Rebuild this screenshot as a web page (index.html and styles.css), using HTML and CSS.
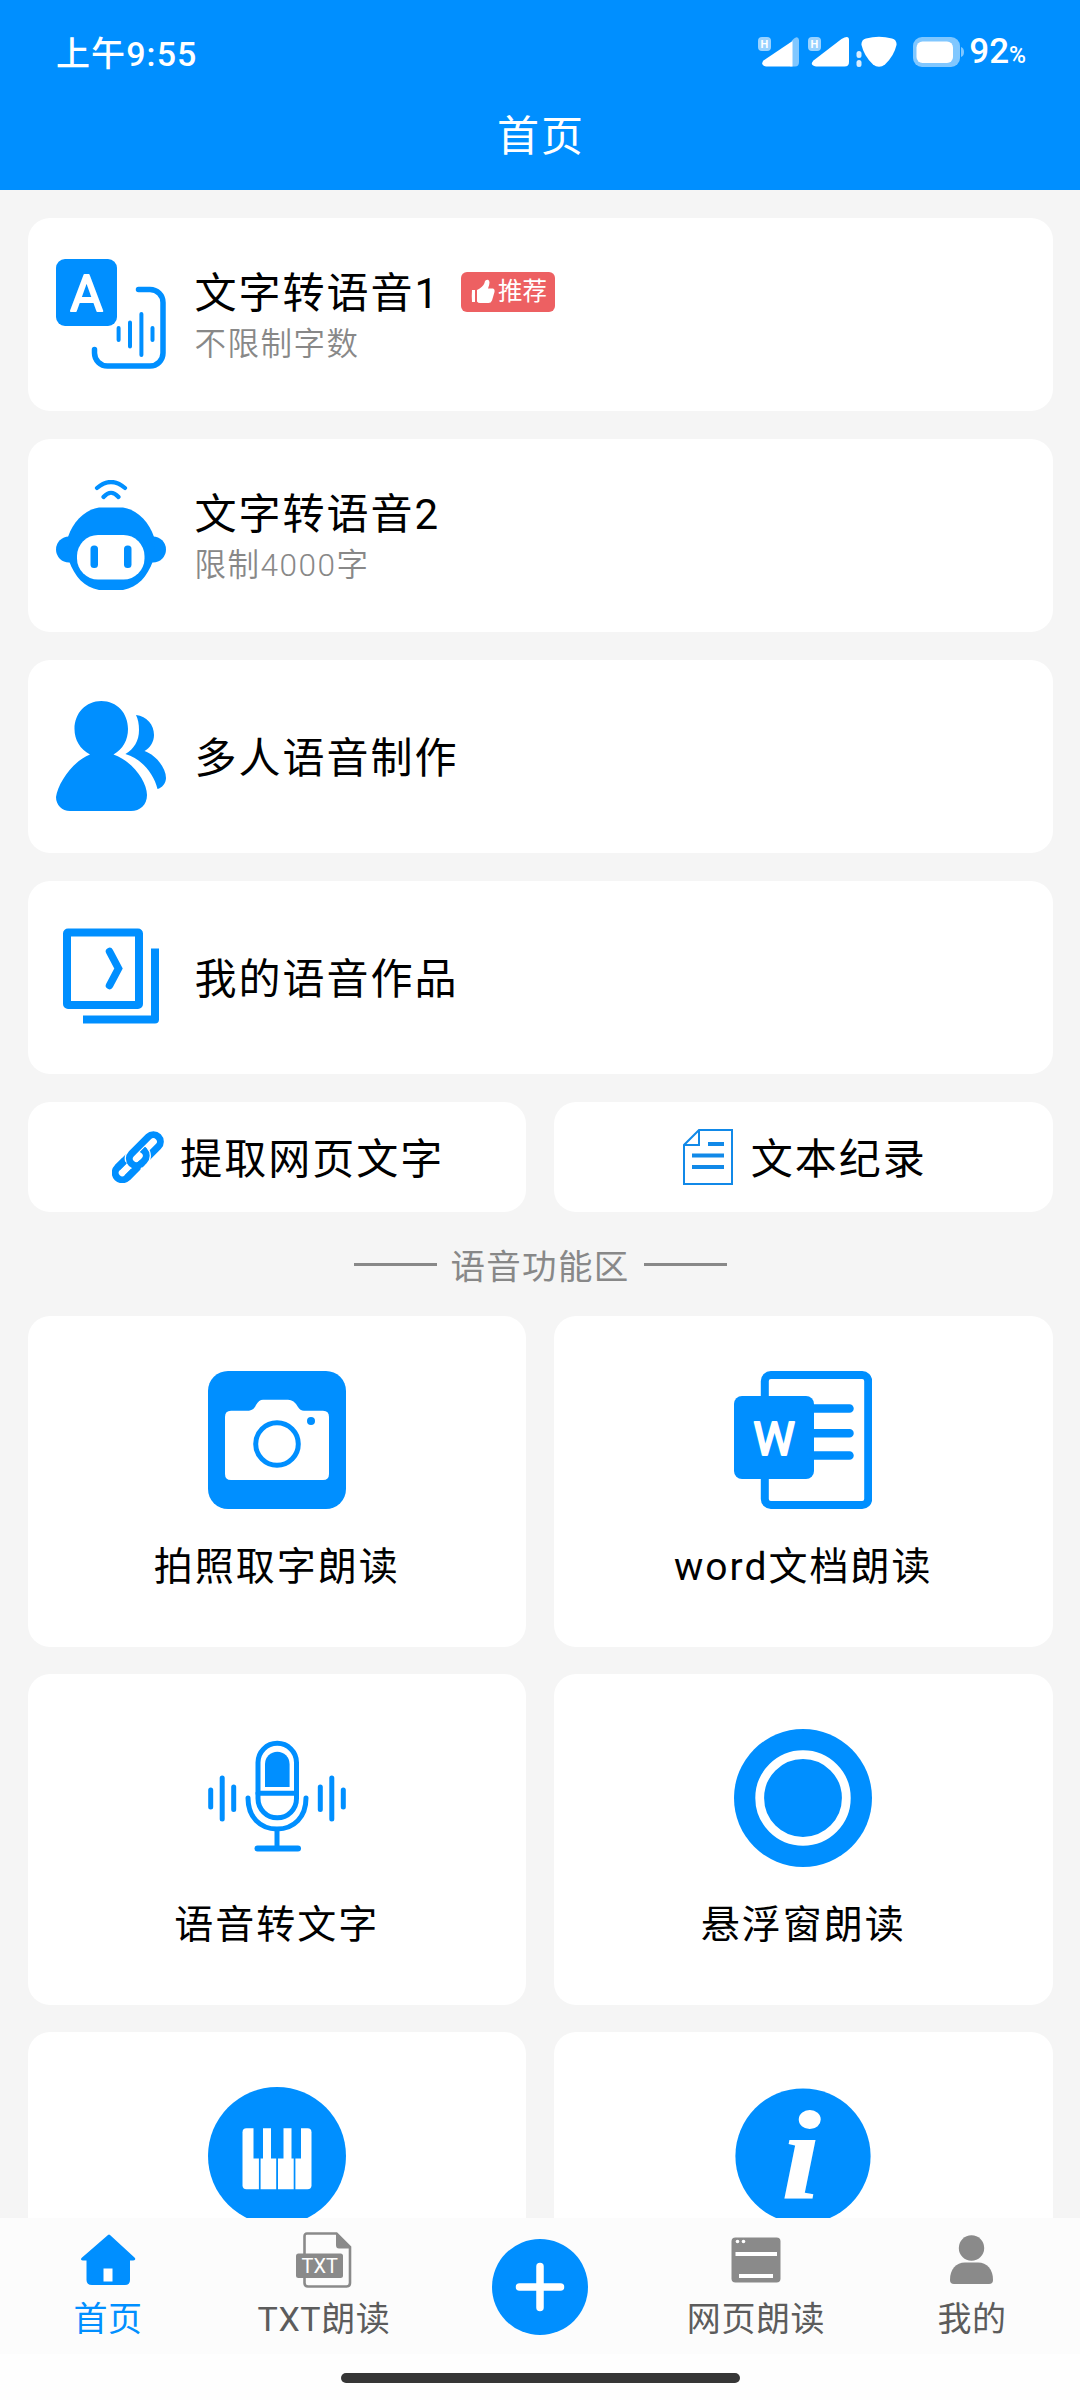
FILE: index.html
```html
<!DOCTYPE html>
<html lang="zh-CN">
<head>
<meta charset="utf-8">
<title>首页</title>
<link rel="stylesheet" href="styles.css">
</head>
<body>
<header class="header">
  <div class="status">
    <span class="time">上午9:55</span>
    <span class="status-right">
      <svg class="status-icons" width="206" height="32" viewBox="0 0 206 32" fill="#fff">
        <g id="signal">
          <rect x="0" y="1" width="13" height="14" rx="4" opacity=".6"/>
          <text x="6.500" y="12" font-size="11" font-weight="700" text-anchor="middle">H</text>
        </g>
        <path d="M34 4.500Q40 -1.500 41 4V26Q41 30.500 37 30.500H32Z" opacity=".5"/>
        <path d="M34.500 5V30.500H8Q2 29 5.500 24.500Z"/>
        <use href="#signal" x="50"/>
        <path d="M83.500 3Q91 -1.500 91 4V26Q91 30.500 86.500 30.500H58Q51 29 55.500 24.500Z"/>
        <rect x="98.500" y="15" width="5" height="7" rx="2.500" opacity=".85"/>
        <rect x="98.500" y="24" width="5" height="7" rx="2.500" opacity=".85"/>
        <path d="M103.500 9Q103 4 108 2.500Q121 -1 134 2.500Q139 4 138.500 9Q136 20 127 28.500Q121 33 115 28.500Q106 20 103.500 9Z"/>
        <rect x="155" y="1" width="47" height="30" rx="9" opacity=".5"/>
        <path d="M203 11q3 1 3 5t-3 5z" opacity=".5"/>
        <rect x="158.500" y="5.500" width="36.500" height="21.500" rx="6"/>
      </svg>
      <span class="battery">92<small>%</small></span>
    </span>
  </div>
  <h1 class="title">首页</h1>
</header>

<main class="content">
  <a class="card">
    <svg class="icon" viewBox="0 0 110 110" fill="none" stroke="#008fff" stroke-linecap="round">
      <rect width="61" height="67" rx="9" fill="#008fff" stroke="none"/>
      <text class="mark" x="30.500" y="52" font-size="50" text-anchor="middle">A</text>
      <path stroke-width="5.500" d="M82.500 30.500H94a13 13 0 0 1 13 13V94a13 13 0 0 1-13 13H51.500a13 13 0 0 1-13-13V90.500"/>
      <path stroke-width="4" d="M62.600 69V81M74 63.500V87.500M85.400 55V96M96.500 69V81"/>
    </svg>
    <div class="text">
      <div class="name">文字转语音1
        <span class="badge">
          <svg width="24" height="26" viewBox="0 0 24 26" fill="#fff"><path d="M1 11H4V23H1Q.5 17 1 11ZM6 11Q12 8 13.500 4Q14 .5 17 .8Q20 2 17 9.500H22Q24 10 23.500 13L21 21.500Q20 24 17.500 24H9Q7 24 6 22.500Z"/></svg>推荐
        </span>
      </div>
      <div class="note">不限制字数</div>
    </div>
  </a>
  <a class="card">
    <svg class="icon" viewBox="0 0 110 110" fill="#008fff">
      <circle cx="13" cy="69.500" r="13"/><circle cx="97" cy="69.500" r="13"/>
      <path d="M43 27.500H67C82 30 93 42 98 57C99 66 99 73 97 81C91 97 82 107 67 110H43C28 107 19 97 13 81C11 73 11 66 12 57C17 42 28 30 43 27.500Z"/>
      <rect x="21" y="55" width="67.500" height="44.500" rx="21" fill="#fff"/>
      <rect x="34.500" y="65.500" width="7.500" height="22.500" rx="3.500"/><rect x="68" y="65.500" width="7.500" height="22.500" rx="3.500"/>
      <path d="M41 8Q55-4 69 8M47.500 17Q55 8.500 62.500 17" fill="none" stroke="#008fff" stroke-width="4.200" stroke-linecap="round"/>
    </svg>
    <div class="text">
      <div class="name">文字转语音2</div>
      <div class="note">限制4000字</div>
    </div>
  </a>
  <a class="card">
    <svg class="icon" viewBox="0 0 110 110" fill="#008fff">
      <path d="M45.300 0C61 0 72 12 72 28C72 39 67 48 57.500 53.500C76 60 91 80 91 94C91 104 84 110 75 110H14C6 110 0 104 0 96C2 82 17 60 34 53.500C24 48 18.500 39 18.500 28C18.500 12 30 0 45.300 0Z"/>
      <path d="M80 14C91 15 98 24 98 34C98 41 94 47 88.500 50C100 54 110 67 110 77C110 82 106 87 101.500 88C98 73 86 58 69.400 53C78 48 83 40 83 29C83 23 82 18 80 14Z"/>
    </svg>
    <div class="text"><div class="name">多人语音制作</div></div>
  </a>
  <a class="card">
    <svg class="icon" viewBox="0 0 110 110" fill="none" stroke="#008fff" stroke-width="8">
      <rect x="11" y="10.500" width="72" height="72.500" rx="1"/>
      <path d="M99 26.500V97.500H27" stroke-linejoin="round"/>
      <path d="M53.500 29.500L62.500 46.500L53.500 63.500" stroke-width="7.500" stroke-linecap="round"/>
    </svg>
    <div class="text"><div class="name">我的语音作品</div></div>
  </a>

  <div class="pair">
    <a class="button">
      <svg width="52" height="52" viewBox="0 0 52 52" fill="none">
        <g transform="translate(25.800 26.200) rotate(-45)" stroke="#008fff" stroke-width="7">
          <rect x="-29" y="-7" width="38" height="14" rx="7"/>
          <rect x="-9" y="-7" width="38" height="14" rx="7" stroke="#fff" stroke-width="9.500"/>
          <path d="M-22 -7H-12M-22 7H-6"/>
          <rect x="-9" y="-7" width="38" height="14" rx="7"/>
          <path d="M-1 7H2A7 7 0 0 0 9 0" stroke="#fff" stroke-width="9.500"/>
          <path d="M-4 7H2A7 7 0 0 0 9 0V-2"/>
        </g>
      </svg>提取网页文字
    </a>
    <a class="button">
      <svg class="doc" width="50" height="56" viewBox="0 0 50 56" fill="none" stroke="#1189e8" stroke-width="2">
        <path d="M16 1H49V55H1V16ZM16 1V16H1"/>
        <path d="M25 15H41M9 26.500H41M9 38H41" stroke-width="4"/>
      </svg>文本纪录
    </a>
  </div>

  <h2 class="section">语音功能区</h2>

  <div class="grid">
    <a class="tile">
      <svg viewBox="0 0 138 138">
        <rect width="138" height="138" rx="20" fill="#008fff"/>
        <path d="M23 39.700H41Q46 39 48 34Q51 28.700 55 28.700H80Q86 28.700 90 36Q92 39.700 96 39.700H115Q121 39.700 121 46V103Q121 109 115 109H23Q17 109 17 103V46Q17 39.700 23 39.700Z" fill="#fff"/>
        <circle cx="69" cy="73" r="21.300" fill="none" stroke="#008fff" stroke-width="5"/>
        <circle cx="103" cy="50" r="4" fill="#008fff"/>
      </svg>
      拍照取字朗读
    </a>
    <a class="tile">
      <svg viewBox="0 0 138 138">
        <rect x="30.800" y="4" width="103.400" height="130" rx="6" fill="none" stroke="#008fff" stroke-width="8"/>
        <rect y="25" width="80" height="83" rx="8" fill="#008fff"/>
        <path d="M78 37.500H115.500M78 62.300H115.500M78 84.500H115.500" stroke="#008fff" stroke-width="8.500" stroke-linecap="round"/>
        <text class="mark" x="40" y="84" font-size="47" text-anchor="middle">W</text>
      </svg>
      word文档朗读
    </a>
    <a class="tile">
      <svg viewBox="0 0 138 138" fill="none" stroke="#008fff" stroke-width="5" stroke-linecap="round">
        <rect x="50" y="14.300" width="38.500" height="74.500" rx="19.200"/>
        <path d="M57 58V35a12.300 12.300 0 0 1 24.600 0V58Z" fill="#008fff" stroke="none"/>
        <path d="M50 64.300H88M40 69C40 88 52 100 69 100S98 88 98 69M69 100V119"/>
        <path d="M49.500 119.500H90" stroke-width="6"/>
        <path d="M2.700 61V78M14.200 49V90M25.700 58V80.500M112.300 58V80.500M123.800 49V90M135.300 61V78"/>
      </svg>
      语音转文字
    </a>
    <a class="tile">
      <svg viewBox="0 0 138 138">
        <circle cx="69" cy="69" r="69" fill="#008fff"/>
        <circle cx="69" cy="69" r="43.300" fill="none" stroke="#fff" stroke-width="8.800"/>
      </svg>
      悬浮窗朗读
    </a>
    <a class="tile">
      <svg viewBox="0 0 138 138">
        <circle cx="69" cy="69" r="69" fill="#008fff"/>
        <rect x="34.500" y="41.300" width="69" height="61" rx="4" fill="#fff"/>
        <path d="M45.500 41H55V71.500H52.600V103H50.900V71.500H45.500ZM63 41H75.500V71.500H70V103H68.200V71.500H63ZM83.500 41H93V71.500H87.400V103H85.700V71.500H83.500Z" fill="#008fff"/>
      </svg>
    </a>
    <a class="tile">
      <svg viewBox="0 0 138 138">
        <circle cx="69" cy="69" r="67.600" fill="#008fff"/>
        <text class="info" transform="translate(67 111) scale(1.150 1)" font-size="127" text-anchor="middle">i</text>
      </svg>
    </a>
  </div>
</main>

<nav class="nav">
  <a class="tab active">
    <svg width="56" height="56" viewBox="0 0 56 56" fill="#008fff">
      <path d="M28 3Q29 2 30 3L55 26Q56 28 53 28.500H50V48Q50 53 45 53H12Q6.500 53 6.500 48V28.500H3Q0 28 1.500 26Z"/>
      <rect x="23.500" y="36.500" width="9" height="13" fill="#fff"/>
    </svg>首页
  </a>
  <a class="tab">
    <svg width="56" height="56" viewBox="0 0 56 56" fill="none">
      <path d="M11 1.500H40.500L54 15V51Q54 54.500 50.500 54.500H12Q8.500 54.500 8.500 51V4.500Q8.500 1.500 11 1.500Z" stroke="#8a8a8a" stroke-width="2.600"/>
      <path d="M40 1L54.500 16.500H43Q40 16.500 40 13Z" fill="#8a8a8a"/>
      <rect x="0" y="21.500" width="47" height="24.500" rx="2.500" fill="#8a8a8a"/>
      <text class="ext" x="23.700" y="41" text-anchor="middle">TXT</text>
    </svg>TXT朗读
  </a>
  <a class="tab add">
    <svg width="96" height="96" viewBox="0 0 96 96">
      <circle cx="48" cy="48" r="48" fill="#008fff"/>
      <path d="M27.500 48H68.500M48 27.500V68.500" stroke="#fff" stroke-width="7.500" stroke-linecap="round"/>
    </svg>
  </a>
  <a class="tab">
    <svg width="56" height="56" viewBox="0 0 56 56" fill="#8a8a8a">
      <rect x="3.500" y="5.500" width="49" height="45" rx="4"/>
      <path d="M7.500 22H49M11 44H45" stroke="#fff" stroke-width="4"/>
      <circle cx="9.500" cy="9.500" r="1.800" fill="#fff"/><circle cx="15.500" cy="9.500" r="1.800" fill="#fff"/>
    </svg>网页朗读
  </a>
  <a class="tab">
    <svg width="56" height="56" viewBox="0 0 56 56" fill="#8a8a8a">
      <circle cx="27.500" cy="16" r="12.700"/>
      <path d="M6 48C6 37 12 30.500 21 30.500H34C43 30.500 49 37 49 48Q49 52 45 52H10Q6 52 6 48Z"/>
    </svg>我的
  </a>
</nav>
<div class="gesture"><span class="pill"></span></div>
</body>
</html>
```
FILE: styles.css
```css
* {
  box-sizing: border-box;
}

body {
  margin: 0;
  width: 1080px;
  height: 2400px;
  display: flex;
  flex-direction: column;
  overflow: hidden;
  background: #f5f5f5;
  color: #000;
  font-family: Roboto, "Noto Sans CJK SC", sans-serif;
}

.header {
  flex: none;
  height: 190px;
  background: #008fff;
  color: #fff;
}

.status {
  display: flex;
  justify-content: space-between;
  align-items: center;
  height: 103px;
  padding: 0 54px 0 56px;
}

.time {
  font-size: 34px;
  font-weight: 500;
  letter-spacing: 1.1px;
}

.status-right {
  display: flex;
  align-items: center;
  gap: 5px;
}

.battery {
  font-size: 35px;
  font-weight: 500;
}

.battery small {
  font-size: 23px;
}

.title {
  margin: 0;
  font-size: 42px;
  font-weight: 400;
  letter-spacing: 2px;
  line-height: 68px;
  text-align: center;
  text-indent: 2px;
}

.content {
  flex: 1;
  min-height: 0;
  overflow: hidden;
  display: flex;
  flex-direction: column;
  padding: 27.5px 27.5px 0;
}

.card {
  flex: none;
  display: flex;
  align-items: center;
  gap: 29px;
  height: 193.5px;
  margin-bottom: 27.5px;
  padding: 0 28px;
  background: #fff;
  border-radius: 22px;
}

.icon {
  width: 110px;
  height: 110px;
}

.mark {
  fill: #fff;
  stroke: #fff;
  stroke-width: 2px;
  stroke-linejoin: round;
  font-weight: 400;
  letter-spacing: 0;
}

.text {
  padding-top: 6px;
}

.name {
  display: flex;
  align-items: center;
  font-size: 42px;
  letter-spacing: 2px;
  line-height: 56px;
}

.note {
  font-size: 31.5px;
  letter-spacing: 1.5px;
  line-height: 46px;
  color: #888;
  font-weight: 350;
}

.badge {
  display: flex;
  align-items: center;
  gap: 3px;
  height: 40px;
  margin: -5px 0 0 21px;
  padding: 0 8px 0 10px;
  border-radius: 6px;
  background: #ed6062;
  color: #fff;
  font-size: 24.5px;
  letter-spacing: 0;
}

.pair {
  flex: none;
  display: grid;
  grid-template-columns: 1fr 1fr;
  gap: 28px;
}

.button {
  display: flex;
  justify-content: center;
  align-items: center;
  gap: 16px;
  height: 110.5px;
  padding: 0 0 3px 3px;
  border-radius: 22px;
  background: #fff;
  font-size: 42px;
  letter-spacing: 2px;
}

.button svg {
  margin-top: 3px;
}

.doc {
  margin-right: 2px;
}

.section {
  flex: none;
  display: flex;
  justify-content: center;
  align-items: center;
  gap: 14px;
  height: 104px;
  margin: 0;
  font-size: 34.5px;
  font-weight: 400;
  letter-spacing: 1.3px;
  color: #888;
}

.section::before,
.section::after {
  content: "";
  width: 83px;
  height: 3px;
  background: #888;
}

.grid {
  flex: none;
  display: grid;
  grid-template-columns: 1fr 1fr;
  grid-auto-rows: 330.5px;
  gap: 27.5px 28px;
}

.tile {
  display: flex;
  flex-direction: column;
  align-items: center;
  padding-top: 54.5px;
  border-radius: 22px;
  background: #fff;
  font-size: 39px;
  letter-spacing: 2px;
  line-height: 56px;
}

.tile svg {
  width: 138px;
  height: 138px;
  margin-bottom: 30px;
}

.info {
  fill: #fff;
  font-family: "Liberation Serif", serif;
  font-style: italic;
  font-weight: 700;
  letter-spacing: 0;
}

.nav {
  flex: none;
  display: grid;
  grid-template-columns: repeat(5, 1fr);
  height: 136.5px;
  background: #fcfcfc;
}

.tab {
  display: flex;
  flex-direction: column;
  align-items: center;
  padding-top: 14px;
  gap: 7.5px;
  color: #5c5c5c;
  font-size: 34px;
  letter-spacing: .6px;
  line-height: 48px;
}

.tab.active {
  color: #008fff;
}

.tab.add {
  padding-top: 21.5px;
}

.ext {
  fill: #fff;
  font-size: 20px;
  font-weight: 400;
  letter-spacing: 0;
}

.gesture {
  flex: none;
  display: flex;
  justify-content: center;
  height: 46px;
  padding-top: 19px;
  background: #fefefe;
}

.pill {
  width: 399px;
  height: 10px;
  border-radius: 5px;
  background: #363636;
}
```
